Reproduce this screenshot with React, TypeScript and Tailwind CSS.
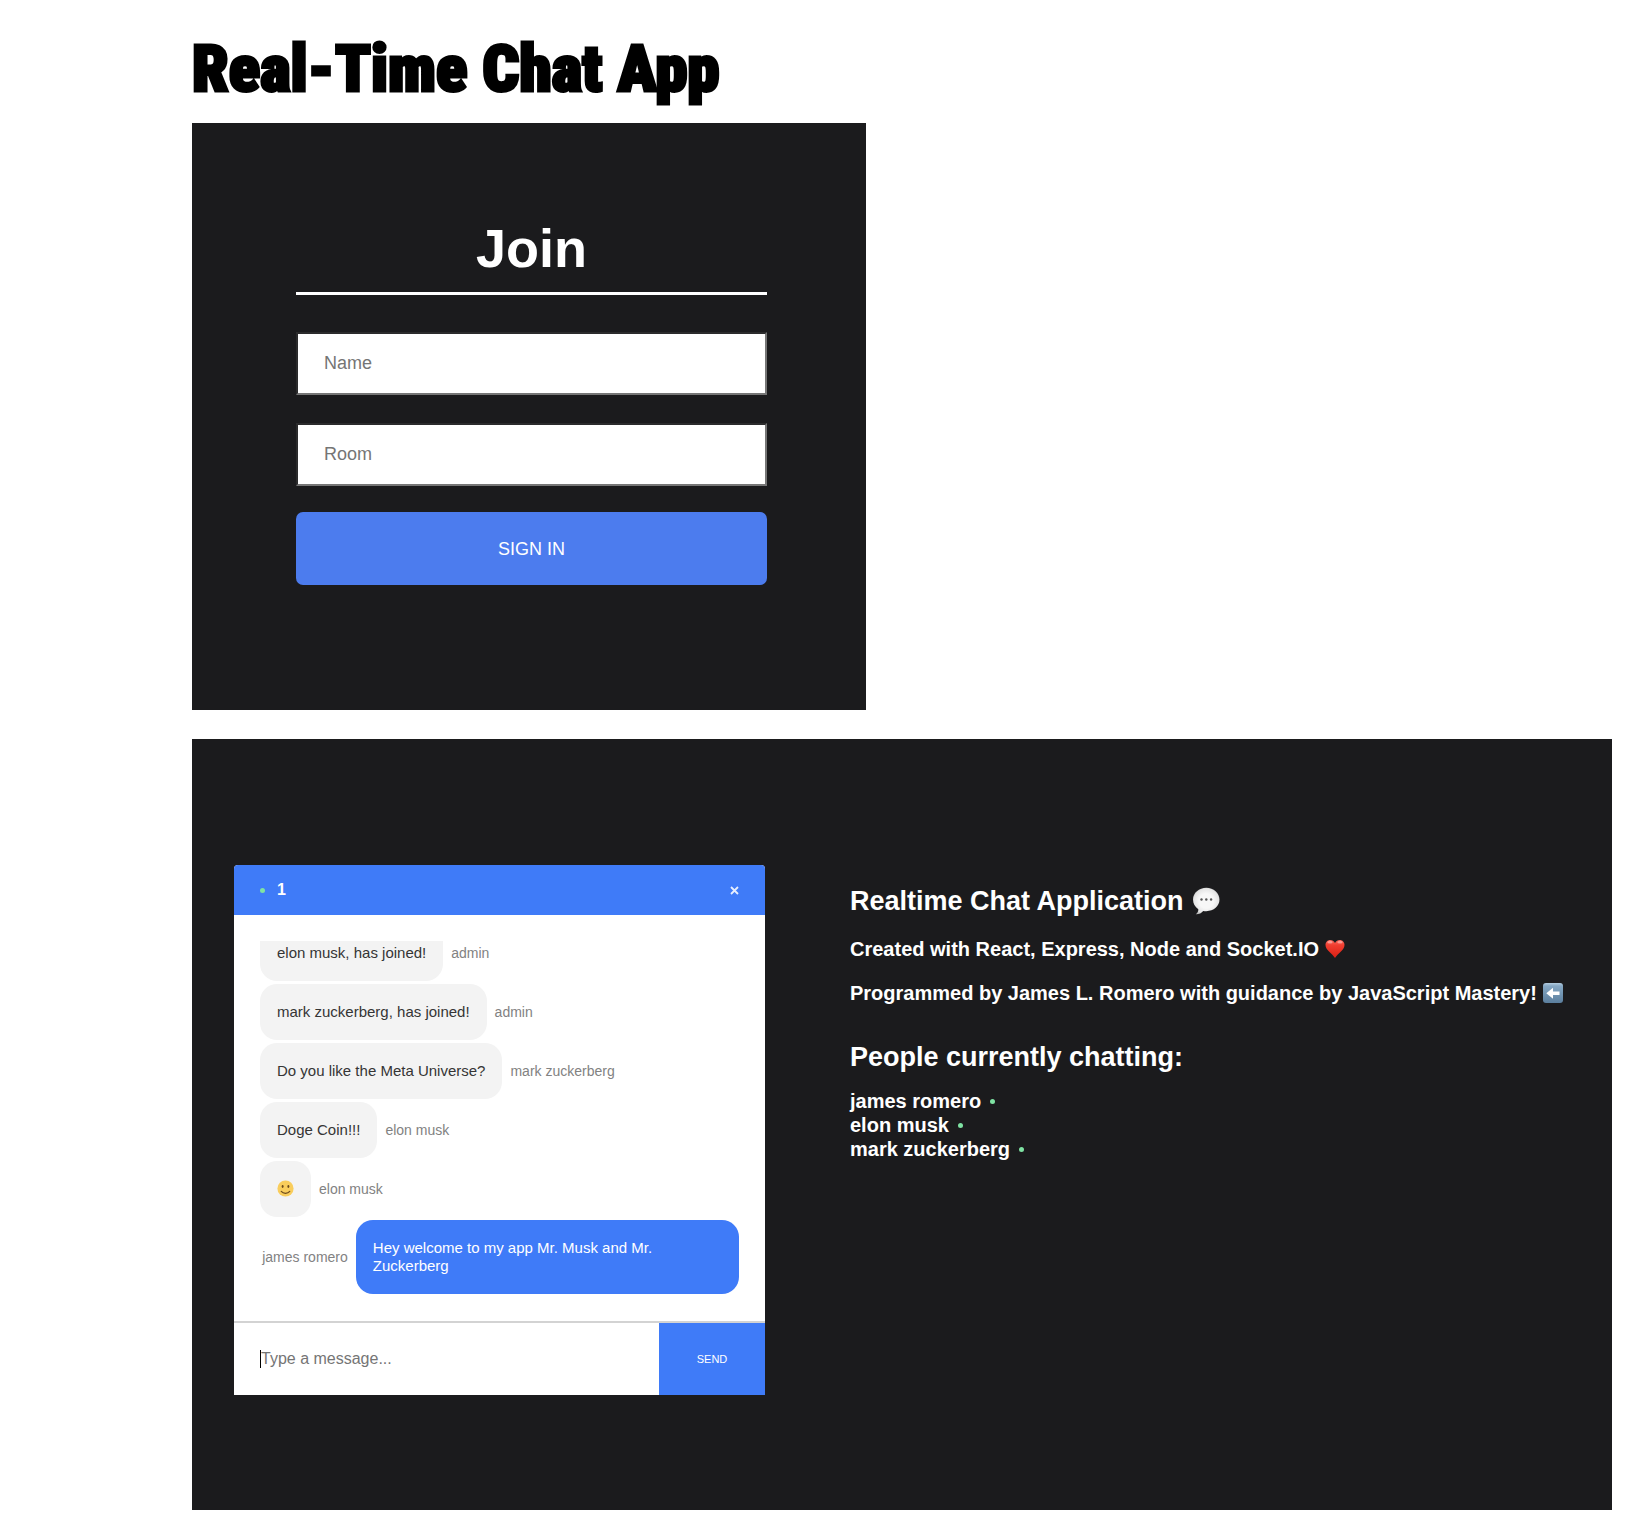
import React from 'react';

type Message = { text: React.ReactNode; user: string; own?: boolean };

function SmileEmoji() {
  return (
    <svg viewBox="0 0 16 16" className="mb-px size-[17px]" role="img" aria-label="Smiling face">
      <circle cx="8" cy="8" r="7.6" fill="#f9cd5c" />
      <ellipse cx="5.3" cy="6.2" rx="0.9" ry="1.4" fill="#6b4a1c" />
      <ellipse cx="10.7" cy="6.2" rx="0.9" ry="1.4" fill="#6b4a1c" />
      <path d="M4 10.8c2 2.3 6 2.3 8 0" fill="none" stroke="#6b4a1c" strokeWidth="1.1" strokeLinecap="round" />
    </svg>
  );
}

function SpeechEmoji() {
  return (
    <svg viewBox="0 0 28 28" className="size-7" role="img" aria-label="Speech balloon">
      <defs>
        <radialGradient id="speech" cx="0.5" cy="0.5" r="0.55">
          <stop offset="0.5" stopColor="#f7f7f7" />
          <stop offset="0.85" stopColor="#e4e4e4" />
          <stop offset="1" stopColor="#bdbdbd" />
        </radialGradient>
      </defs>
      <path
        d="M14.3.8C7 .8 1 5.9 1 12.6c0 4 2 7.5 5.3 9.6.2 2-.8 3.7-2.5 5 3.3.1 5.8-1.3 7.4-3.3 1 .2 2 .3 3.1.3 7.4 0 13.2-5 13.2-11.600S21.700.8 14.300.8z"
        fill="url(#speech)"
      />
      <circle cx="9.5" cy="12.5" r="1.2" fill="#555" />
      <circle cx="14.3" cy="12.5" r="1.2" fill="#555" />
      <circle cx="19.1" cy="12.5" r="1.2" fill="#555" />
    </svg>
  );
}

function HeartEmoji() {
  return (
    <svg viewBox="0 0 20 20" className="size-5" role="img" aria-label="Red heart">
      <defs>
        <linearGradient id="heart" x1="0" y1="0" x2="0" y2="1">
          <stop offset="0" stopColor="#fb6a5e" />
          <stop offset="0.3" stopColor="#f03d2f" />
          <stop offset="1" stopColor="#d81f14" />
        </linearGradient>
      </defs>
      <path
        d="M10 4C9 1.8 7.2.9 5.2.9 2.5.9.5 3.1.5 6c0 5 6.3 7.8 9.5 13.1C13.2 13.8 19.5 11 19.5 6c0-2.9-2-5.1-4.7-5.1C12.8.9 11 1.8 10 4z"
        fill="url(#heart)"
      />
      <ellipse cx="5" cy="3.2" rx="2.6" ry="1.2" fill="#fff" opacity="0.4" />
      <ellipse cx="15" cy="3.2" rx="2.6" ry="1.2" fill="#fff" opacity="0.4" />
    </svg>
  );
}

function ArrowEmoji() {
  return (
    <svg viewBox="0 0 20 20" className="size-5 shrink-0" role="img" aria-label="Left arrow">
      <defs>
        <linearGradient id="arrow" x1="0" y1="0" x2="0" y2="1">
          <stop offset="0" stopColor="#b4cde0" />
          <stop offset="0.15" stopColor="#86a8c4" />
          <stop offset="1" stopColor="#5b7f9e" />
        </linearGradient>
      </defs>
      <rect width="20" height="20" rx="3" fill="url(#arrow)" />
      <path d="M3.3 10.2 10 4.7v3.7h6.5v3.7H10v3.7z" fill="#fff" />
    </svg>
  );
}

function Dot() {
  return <span className="size-[5px] shrink-0 rounded-full bg-[#7fe3a3]" />;
}

const messages: Message[] = [
  { text: 'elon musk, has joined!', user: 'admin' },
  { text: 'mark zuckerberg, has joined!', user: 'admin' },
  { text: 'Do you like the Meta Universe?', user: 'mark zuckerberg' },
  { text: 'Doge Coin!!!', user: 'elon musk' },
  { text: <SmileEmoji />, user: 'elon musk' },
  { text: 'Hey welcome to my app Mr. Musk and Mr. Zuckerberg', user: 'james romero', own: true },
];

const people = ['james romero', 'elon musk', 'mark zuckerberg'];

function MessageRow({ text, user, own }: Message) {
  if (own) {
    return (
      <li className="flex shrink-0 items-center justify-end gap-2">
        <span className="text-sm whitespace-nowrap text-[#828282]">{user}</span>
        <p className="w-4/5 rounded-[17px] bg-[#3f7bf8] px-[17px] py-[19px] text-[15px] leading-[18px] text-white">{text}</p>
      </li>
    );
  }
  return (
    <li className="flex shrink-0 items-center gap-2">
      <div className="max-w-4/5 rounded-[17px] bg-[#f3f3f3] px-[17px] py-[19px] text-[15px] leading-[18px] text-[#353535]">{text}</div>
      <span className="text-sm text-[#828282]">{user}</span>
    </li>
  );
}

function JoinForm() {
  const field =
    'h-[63px] w-full border-2 border-t-[#2b2b2c] border-l-[#2b2b2c] border-r-[#767676] border-b-[#767676] bg-white px-[26px] text-lg text-black outline-none placeholder:text-[#757575]';
  return (
    <section className="w-full max-w-[674px] bg-[#1b1b1d] pt-[94px] pr-[99px] pb-[125px] pl-[104px]">
      <form className="flex flex-col" onSubmit={(e) => e.preventDefault()}>
        <h2 className="border-b-[3px] border-white pb-[13px] text-center text-[54px] leading-[62px] font-bold text-white">Join</h2>
        <input aria-label="Name" placeholder="Name" className={field + ' mt-[37px]'} />
        <input aria-label="Room" placeholder="Room" className={field + ' mt-7'} />
        <button type="submit" className="mt-[26px] h-[73px] rounded-[7px] bg-[#4c7cee] text-lg text-white">
          SIGN IN
        </button>
      </form>
    </section>
  );
}

function ChatBox() {
  return (
    <section className="flex h-[530px] w-[531px] shrink-0 flex-col overflow-hidden rounded-t bg-white">
      <header className="flex h-[50px] shrink-0 items-center justify-between bg-[#3f7bf8] px-[26px] text-white">
        <div className="flex items-center gap-3">
          <Dot />
          <h3 className="text-base font-bold">1</h3>
        </div>
        <button type="button" aria-label="Close">
          <svg viewBox="0 0 9 9" className="size-[9px]" fill="none" stroke="#e6eefe" strokeWidth="1.8">
            <path d="M1 1l7 7M8 1L1 8" />
          </svg>
        </button>
      </header>
      <ul className="mx-[26px] mt-[26px] mb-[27px] flex min-h-0 flex-1 flex-col justify-end gap-[3px] overflow-hidden">
        {messages.map((m, i) => (
          <MessageRow key={i} {...m} />
        ))}
      </ul>
      <form className="flex h-[74px] shrink-0 border-t-2 border-[#d3d3d3]" onSubmit={(e) => e.preventDefault()}>
        <div className="flex flex-1 items-center pl-[26px]">
          <span className="h-[18px] w-px bg-black" />
          <input
            aria-label="Message"
            placeholder="Type a message..."
            className="h-full min-w-0 flex-1 text-base text-black outline-none placeholder:text-[#757575]"
          />
        </div>
        <button type="submit" className="w-[106px] bg-[#3f7bf8] text-[11px] text-white">
          SEND
        </button>
      </form>
    </section>
  );
}

function Info() {
  return (
    <section className="pt-5 font-bold text-white">
      <h2 className="flex items-center gap-2 text-[27px] leading-8">
        Realtime Chat Application <SpeechEmoji />
      </h2>
      <p className="mt-5 flex items-center gap-[6px] text-xl leading-6">
        Created with React, Express, Node and Socket.IO <HeartEmoji />
      </p>
      <p className="mt-5 flex items-center gap-[6px] text-xl leading-6">
        Programmed by James L. Romero with guidance by JavaScript Mastery! <ArrowEmoji />
      </p>
      <h2 className="mt-9 text-[27px] leading-8">People currently chatting:</h2>
      <ul className="mt-4 text-xl leading-6">
        {people.map((name) => (
          <li key={name} className="flex items-center gap-[9px]">
            {name} <Dot />
          </li>
        ))}
      </ul>
    </section>
  );
}

export default function App() {
  return (
    <main className="min-h-screen bg-white pr-4 pb-7 pl-48 font-['Liberation_Sans',Arial,sans-serif]">
      <h1 className="pt-[25px] pb-[10px] font-[Impact,'Roboto_Condensed','Liberation_Sans_Narrow',sans-serif] text-[65px] leading-[88px] font-black whitespace-nowrap text-black [-webkit-text-stroke:3px_black]">
        Real-Time Chat App
      </h1>
      <JoinForm />
      <div className="mt-[29px] flex items-start gap-[85px] bg-[#1b1b1d] pt-[126px] pr-8 pb-[115px] pl-[42px]">
        <ChatBox />
        <Info />
      </div>
    </main>
  );
}
